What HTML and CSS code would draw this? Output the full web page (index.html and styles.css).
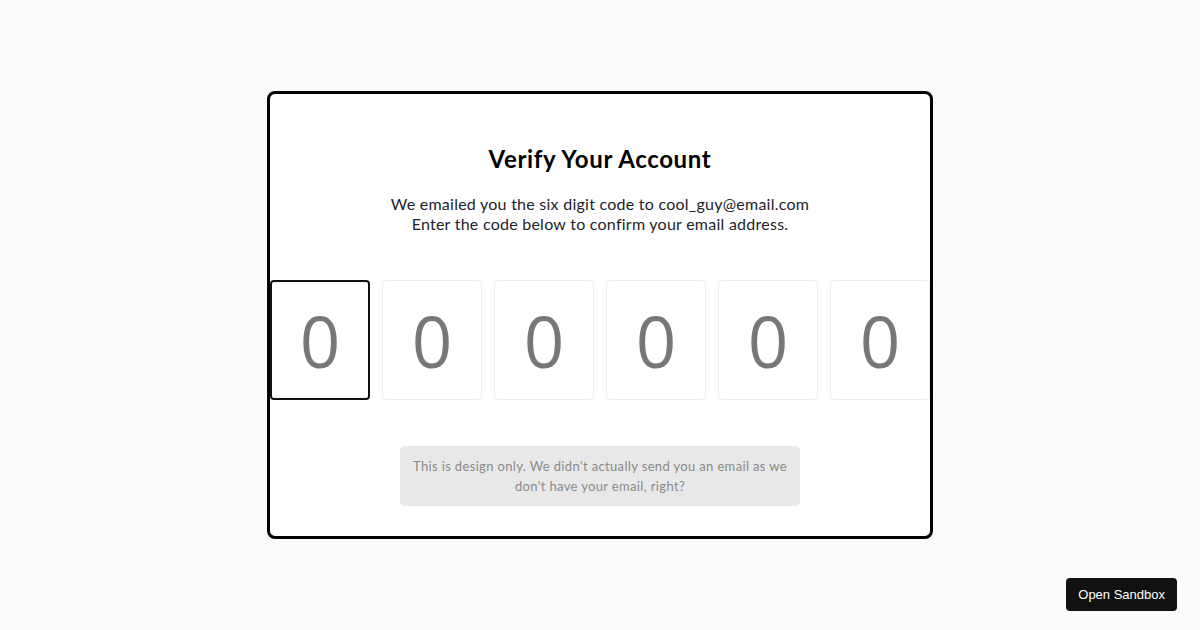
FILE: index.html
```html
<!DOCTYPE html>
<html lang="en">
<head>
<meta charset="utf-8">
<title>Verify Your Account</title>
<link rel="stylesheet" href="styles.css">
</head>
<body>
<main class="stage">
  <section class="card">
    <h1 class="title">Verify Your Account</h1>
    <p class="lead">We emailed you the six digit code to cool_guy@email.com<br>Enter the code below to confirm your email address.</p>
    <div class="code">
      <input class="digit is-focused" type="text" maxlength="1" placeholder="0">
      <input class="digit" type="text" maxlength="1" placeholder="0">
      <input class="digit" type="text" maxlength="1" placeholder="0">
      <input class="digit" type="text" maxlength="1" placeholder="0">
      <input class="digit" type="text" maxlength="1" placeholder="0">
      <input class="digit" type="text" maxlength="1" placeholder="0">
    </div>
    <div class="notice">This is design only. We didn't actually send you an email as we don't have your email, right?</div>
  </section>
</main>
<a class="sandbox" href="#">Open Sandbox</a>
</body>
</html>
```
FILE: styles.css
```css
* { box-sizing: border-box; }
html, body { margin: 0; height: 100%; }
body {
  background: #f9fbfd;
  font-family: Lato, "Open Sans", sans-serif;
  color: #1c1c28;
}
.stage {
  display: flex;
  justify-content: center;
  padding-top: 91px;
}
.card {
  width: 666px;
  height: 448px;
  border: 3px solid #000;
  border-radius: 8px;
  background: #fff;
  display: flex;
  flex-direction: column;
  align-items: center;
}
.title {
  margin: 50px 0 0;
  font-size: 24px;
  line-height: 30px;
  font-weight: 700;
  color: #000;
  letter-spacing: 0.65px;
}
.lead {
  margin: 20px 0 0;
  font-size: 16px;
  line-height: 20px;
  text-align: center;
  color: #1e1e2a;
  letter-spacing: 0.25px;
}
.code {
  margin-top: 46px;
  display: flex;
  gap: 12px;
}
.digit {
  width: 100px;
  height: 120px;
  border: 1px solid #ececec;
  border-radius: 4px;
  background: #fff;
  text-align: center;
  font-family: "Open Sans", sans-serif;
  font-size: 71px;
  color: #777;
  padding: 0;
  outline: none;
}
.digit::placeholder { color: #777; opacity: 1; }
.digit.is-focused { border: 2px solid #111; }
.notice {
  margin-top: 46px;
  width: 400px;
  padding: 10px 10px;
  background: #e8e8e8;
  border-radius: 5px;
  font-size: 13px;
  line-height: 20px;
  text-align: center;
  color: #8a8a8a;
  letter-spacing: 0.35px;
}
.sandbox {
  position: fixed;
  right: 23px;
  bottom: 19px;
  height: 33px;
  padding: 0 12px;
  display: flex;
  align-items: center;
  background: #111;
  color: #fff;
  border-radius: 4px;
  font-family: "Liberation Sans", Arial, sans-serif;
  font-size: 13px;
  text-decoration: none;
}
```
